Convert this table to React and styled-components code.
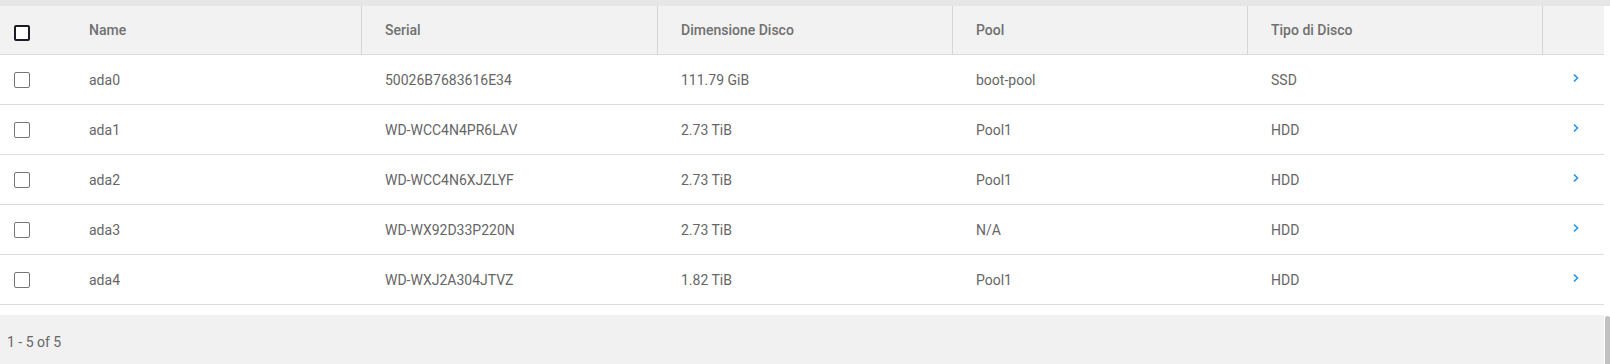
import React from "react";
import styled, { createGlobalStyle } from "styled-components";

const Global = createGlobalStyle`
  html, body { margin: 0; padding: 0; background: #ffffff; }
  body { font-family: Roboto, "Noto Sans", "Liberation Sans", sans-serif; overflow: hidden; }
`;

const COLS = "65px 296px 296px 295px 295px 295px 62px";

const Page = styled.div`
  display: flex;
  align-items: flex-start;
  width: 1610px;
  height: 364px;
  overflow: hidden;
`;

const Main = styled.div`
  width: 1604px;
  flex: 0 0 1604px;
  display: flex;
  flex-direction: column;
  & > * { flex-shrink: 0; }
`;

const TopBand = styled.div`
  height: 6px;
  background: #e6e6e6;
`;

const ScrollTrack = styled.div`
  width: 6px;
  height: 364px;
  flex: 0 0 6px;
  display: flex;
  flex-direction: column;
`;

const TrackTop = styled.div`
  height: 6px;
  background: #e6e6e6;
  flex: 0 0 auto;
`;

const TrackGap = styled.div`
  flex: 1;
`;

const Thumb = styled.div`
  height: 48px;
  flex: 0 0 48px;
  margin-left: 1px;
  background: #c1c1c1;
  border-radius: 3px 3px 0 0;
`;

const HeaderRow = styled.div`
  display: grid;
  grid-template-columns: ${COLS};
  height: 48px;
  background: #f2f2f2;
  border-bottom: 1px solid #dcdcdc;
`;

const HeadCell = styled.div`
  display: flex;
  align-items: center;
  padding-left: ${(p) => (p.$check ? "14px" : p.$divider ? "23px" : "24px")};
  border-left: ${(p) => (p.$divider ? "1px solid #d6d6d6" : "none")};
  font-size: 14px;
  font-weight: 500;
  color: #707070;
  white-space: nowrap;
`;

const Row = styled.div`
  display: grid;
  grid-template-columns: ${COLS};
  height: 49px;
  border-bottom: 1px solid #dcdcdc;
  background: #ffffff;
`;

const Cell = styled.div`
  display: flex;
  align-items: center;
  padding-left: ${(p) => (p.$check ? "14px" : "24px")};
  font-size: 14px;
  color: #666666;
  white-space: nowrap;
`;

const ChevCell = styled.div`
  display: flex;
  align-items: center;
  padding-left: 29px;
`;

const Box = styled.span`
  display: inline-block;
  box-sizing: border-box;
  width: 16px;
  height: 16px;
  border-radius: 2px;
  border: ${(p) => (p.$head ? "2px solid #1c1c26" : "1.5px solid #767676")};
  background: #ffffff;
  margin-top: ${(p) => (p.$head ? "6px" : "1px")};
`;

const Chevron = styled.svg`
  width: 10px;
  height: 10px;
  margin-top: -4px;
`;

const Gap = styled.div`
  height: 10px;
`;

const Footer = styled.div`
  height: 54px;
  background: #f1f1f1;
  display: flex;
  align-items: center;
  padding-left: 7px;
  font-size: 14px;
  color: #666666;
`;

const data = [
  { name: "ada0", serial: "50026B7683616E34", size: "111.79 GiB", pool: "boot-pool", type: "SSD" },
  { name: "ada1", serial: "WD-WCC4N4PR6LAV", size: "2.73 TiB", pool: "Pool1", type: "HDD" },
  { name: "ada2", serial: "WD-WCC4N6XJZLYF", size: "2.73 TiB", pool: "Pool1", type: "HDD" },
  { name: "ada3", serial: "WD-WX92D33P220N", size: "2.73 TiB", pool: "N/A", type: "HDD" },
  { name: "ada4", serial: "WD-WXJ2A304JTVZ", size: "1.82 TiB", pool: "Pool1", type: "HDD" },
];

export default function App() {
  return (
    <>
      <Global />
      <Page>
        <Main>
          <TopBand />
          <HeaderRow>
            <HeadCell $check>
              <Box $head />
            </HeadCell>
            <HeadCell>Name</HeadCell>
            <HeadCell $divider>Serial</HeadCell>
            <HeadCell $divider>Dimensione Disco</HeadCell>
            <HeadCell $divider>Pool</HeadCell>
            <HeadCell $divider>Tipo di Disco</HeadCell>
            <HeadCell $divider />
          </HeaderRow>
          {data.map((d) => (
            <Row key={d.name}>
              <Cell $check>
                <Box />
              </Cell>
              <Cell>{d.name}</Cell>
              <Cell>{d.serial}</Cell>
              <Cell>{d.size}</Cell>
              <Cell>{d.pool}</Cell>
              <Cell>{d.type}</Cell>
              <ChevCell>
                <Chevron viewBox="0 0 10 10">
                  <polyline points="3,1.5 6.5,5 3,8.5" fill="none" stroke="#2196f3" strokeWidth="1.6" />
                </Chevron>
              </ChevCell>
            </Row>
          ))}
          <Gap />
          <Footer>1 - 5 of 5</Footer>
        </Main>
        <ScrollTrack>
          <TrackTop />
          <TrackGap />
          <Thumb />
        </ScrollTrack>
      </Page>
    </>
  );
}
